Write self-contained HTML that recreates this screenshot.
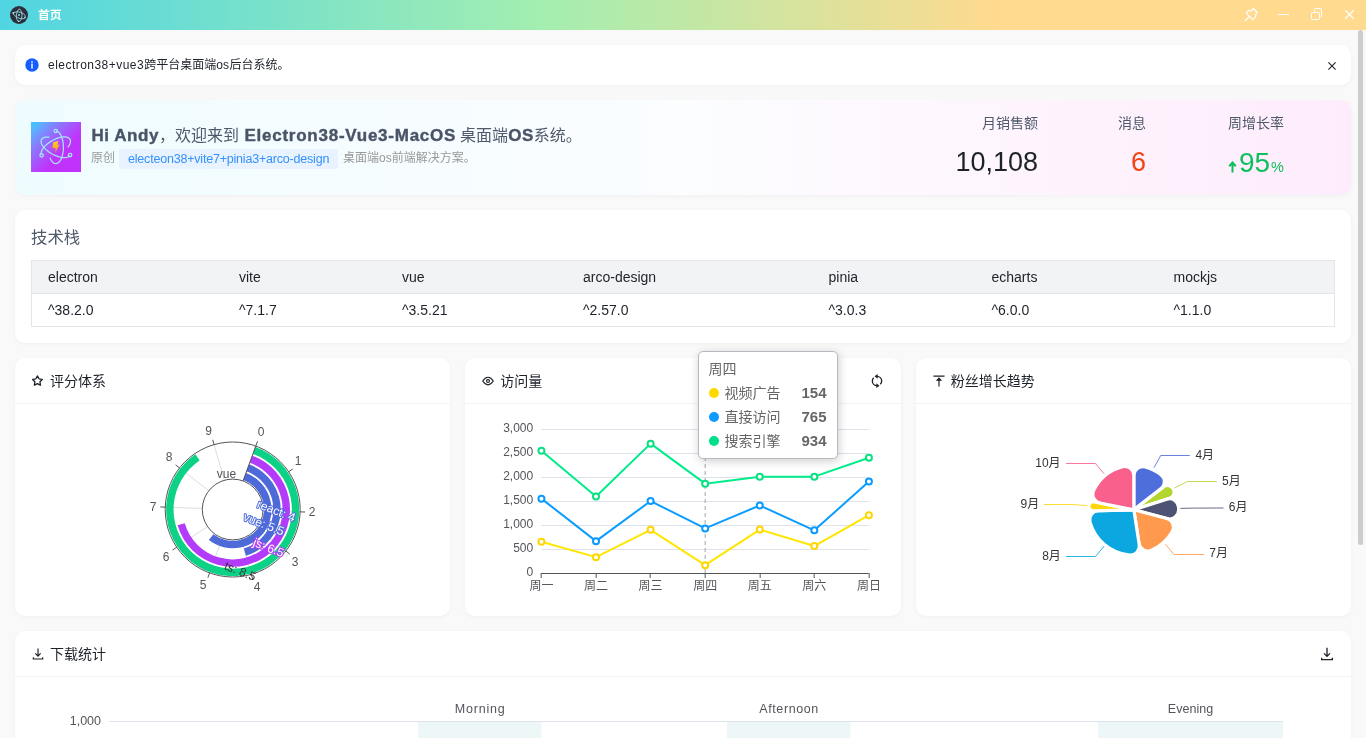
<!DOCTYPE html>
<html lang="zh-CN">
<head>
<meta charset="utf-8">
<title>首页</title>
<style>

*{box-sizing:border-box;margin:0;padding:0}
body{will-change:transform}
html,body{width:1366px;height:738px;overflow:hidden;background:#f9f9f9;font-family:"Liberation Sans","Noto Sans CJK SC",sans-serif;color:#1d2129;font-size:14px}
.abs{position:absolute}
.card{position:absolute;background:#fff;border-radius:10px;box-shadow:0 1px 4px rgba(0,0,0,.04)}
.titlebar{position:absolute;left:0;top:0;width:1366px;height:30px;background:linear-gradient(to right,#50d5e2 0%,#a4eeb0 40%,#ffda8f 73%,#ffda8f 100%)}
.t{position:absolute;white-space:nowrap;line-height:1}
.chd{position:absolute;left:0;top:0;right:0;height:46px;border-bottom:1px solid #f2f3f5}
.chd .t{font-size:14px;color:#1d2129}
.hd b{color:#4a5467;font-size:17px;letter-spacing:0.55px;-webkit-text-stroke:0.4px #4a5467}
svg{position:absolute;overflow:visible}
svg text{font-family:"Liberation Sans","Noto Sans CJK SC",sans-serif}

</style>
</head>
<body>

<div class="titlebar">
  <svg style="left:10px;top:6px" width="18" height="18" viewBox="0 0 18 18">
    <circle cx="9" cy="9" r="9" fill="#2b2e3b"/>
    <g fill="none" stroke="#a9edf6" stroke-width="0.8" stroke-linecap="round">
      <path d="M3.2 7.2 C5.2 5.2 9.6 5.4 13.2 7.6 C14.8 8.6 15.6 9.8 15.2 10.8"/>
      <path d="M14.6 12.2 C12.6 13.6 8.2 12.6 5 9.8 C3.8 8.8 3 7.6 3.2 6.6"/>
      <path d="M9.6 3 C11.8 4.6 12.6 8.8 11.6 12.2 C11 14.2 10 15.4 9 15.4"/>
      <path d="M7.8 15 C6.2 13.4 5.8 9.6 7 6.2 C7.6 4.4 8.6 3.2 9.4 3.2"/>
    </g>
    <circle cx="9" cy="9" r="0.9" fill="#a9edf6"/><circle cx="15" cy="11.6" r="0.8" fill="#a9edf6"/><circle cx="3.2" cy="6.9" r="0.8" fill="#a9edf6"/><circle cx="8.6" cy="15.3" r="0.8" fill="#a9edf6"/>
  </svg>
  <div class="t" style="left:38px;top:9.6px;font-size:11.8px;font-weight:bold;color:#fff">首页</div>
  <svg style="left:1243px;top:7px" width="16" height="16" viewBox="0 0 16 16" fill="none" stroke="#fff" stroke-width="1.25" stroke-linejoin="round" stroke-linecap="round">
    <path d="M3.4 6.4 Q4.3 4.2 5.9 3.7 Q7.2 3.4 8.3 3.9 L10.4 1.5 L14.4 5.5 L12.5 7.4 Q13.1 8.6 12.6 9.6 Q11.8 11.5 9.7 12.5 Z"/>
    <path d="M6.1 9.8 L2.2 13.7"/>
  </svg>
  <svg style="left:1278px;top:14px" width="11" height="1" viewBox="0 0 11 1"><rect width="11" height="1" fill="#fff"/></svg>
  <svg style="left:1310px;top:8px" width="13" height="12" viewBox="0 0 13 12" fill="none" stroke="#fff" stroke-width="1">
    <rect x="1.5" y="4.5" width="8" height="7" rx="0.8"/>
    <path d="M4.5 3.5 V1.3 Q4.5 0.5 5.3 0.5 H10.7 Q11.5 0.5 11.5 1.3 V7.7 Q11.5 8.5 10.7 8.5 H10.3"/>
  </svg>
  <svg style="left:1345px;top:10px" width="9" height="9" viewBox="0 0 9 9" stroke="#fff" stroke-width="1.1" stroke-linecap="round"><path d="M0.5 0.5 L8.5 8.5 M8.5 0.5 L0.5 8.5"/></svg>
</div>


<div class="card" style="left:15px;top:45px;width:1336px;height:40px">
  <svg style="left:10px;top:13px" width="14" height="14" viewBox="0 0 14 14"><circle cx="7" cy="7" r="6.7" fill="#165dff"/><rect x="6.3" y="5.6" width="1.4" height="5" fill="#fff"/><rect x="6.3" y="3.2" width="1.4" height="1.5" fill="#fff"/></svg>
  <div class="t" style="left:33px;top:13.5px;font-size:12px;color:#1d2129"><span style="letter-spacing:0.47px">electron38+vue3</span>跨平台桌面端<span style="letter-spacing:0.3px">os</span>后台系统。</div>
  <svg style="left:1313px;top:17px" width="8" height="8" viewBox="0 0 8 8" stroke="#1d2129" stroke-width="1.1"><path d="M0.4 0.4 L7.6 7.6 M7.6 0.4 L0.4 7.6"/></svg>
</div>


<div class="card" style="left:15px;top:100px;width:1336px;height:95px;background:linear-gradient(to right,#effcff 0%,#fbfdff 50%,#fef8fe 65%,#feecfc 100%)">
  <svg style="left:16px;top:22px" width="50" height="50" viewBox="0 0 50 50">
    <defs><linearGradient id="lg1" x1="0" y1="0" x2="1" y2="1"><stop offset="0" stop-color="#35ccff"/><stop offset="0.12" stop-color="#5caeff"/><stop offset="0.3" stop-color="#8a78fd"/><stop offset="0.5" stop-color="#b04afc"/><stop offset="0.62" stop-color="#c033fb"/><stop offset="1" stop-color="#c131fb"/></linearGradient>
    <linearGradient id="lg2" x1="0" y1="0" x2="0" y2="1"><stop offset="0" stop-color="#ffd21f"/><stop offset="1" stop-color="#ff8f1f"/></linearGradient></defs>
    <rect width="50" height="50" fill="url(#lg1)"/>
    <path d="M25.73 9.12 L26.45 9.39 L27.15 9.8 L27.84 10.36 L28.5 11.06 L29.12 11.89 L29.7 12.84 L30.24 13.91 L30.72 15.09 L31.15 16.36 L31.53 17.71 L31.84 19.13 L32.08 20.62 L32.26 22.14 L32.36 23.7 L32.4 25.26 L32.37 26.83 L32.26 28.39 L32.09 29.92 L31.85 31.4 L31.54 32.83 L31.17 34.18 L30.74 35.46 L30.26 36.64 L29.73 37.71 L29.15 38.67 L28.53 39.51 L27.87 40.21 L27.19 40.78 L26.48 41.2 L25.76 41.47 L25.03 41.59 L24.3 41.56 L23.57 41.38 L22.85 41.06 L22.15 40.58 L21.48 39.96 L20.84 39.21 L20.23 38.33 L19.67 37.32 L19.15 36.21 M38.56 33.86 L37.98 34.36 L37.28 34.79 L36.46 35.12 L35.54 35.36 L34.51 35.51 L33.39 35.57 L32.2 35.53 L30.93 35.39 L29.61 35.16 L28.24 34.84 L26.85 34.43 L25.43 33.93 L24 33.36 L22.59 32.71 L21.19 31.99 L19.83 31.21 L18.52 30.37 L17.26 29.49 L16.07 28.57 L14.96 27.62 L13.95 26.64 L13.04 25.66 L12.23 24.67 L11.54 23.68 L10.98 22.71 L10.54 21.77 L10.24 20.86 L10.07 19.99 L10.04 19.17 L10.14 18.4 L10.39 17.7 L10.76 17.07 L11.27 16.52 L11.9 16.05 L12.65 15.66 L13.52 15.37 L14.48 15.16 L15.55 15.05 L16.7 15.04 L17.93 15.12 M10.25 32.44 L10.13 31.68 L10.14 30.86 L10.29 29.99 L10.58 29.07 L10.99 28.12 L11.54 27.15 L12.21 26.15 L12.99 25.15 L13.89 24.15 L14.89 23.17 L15.97 22.2 L17.15 21.26 L18.39 20.36 L19.69 19.5 L21.04 18.7 L22.42 17.96 L23.83 17.28 L25.24 16.68 L26.65 16.17 L28.05 15.73 L29.41 15.39 L30.73 15.14 L32 14.98 L33.2 14.92 L34.32 14.95 L35.35 15.08 L36.28 15.31 L37.11 15.62 L37.82 16.03 L38.42 16.53 L38.88 17.1 L39.22 17.75 L39.42 18.48 L39.48 19.26 L39.41 20.1 L39.2 20.99 L38.86 21.92 L38.39 22.89 L37.79 23.87 L37.07 24.87" fill="none" stroke="#a3e6fc" stroke-width="1.25" stroke-linecap="round" stroke-linejoin="round"/>
    <circle cx="24.8" cy="9" r="1.7" fill="none" stroke="#a3e6fc" stroke-width="1.25"/><circle cx="39.11" cy="33.1" r="1.7" fill="none" stroke="#a3e6fc" stroke-width="1.25"/><circle cx="10.6" cy="33.3" r="1.7" fill="none" stroke="#a3e6fc" stroke-width="1.25"/>
    <path d="M22.2 20.2 L27.5 19 L26.3 23 L28.7 22.6 L24.2 30.7 L24.7 26.3 L21.4 25.9 Z" fill="url(#lg2)"/>
  </svg>
  <div class="t hd" style="left:76.5px;top:26.5px;font-size:16px;color:#4e5969"><b>Hi Andy</b>，欢迎来到<b style="margin-left:5.5px;letter-spacing:0.75px">Electron38-Vue3-MacOS</b><span style="margin-left:4px">桌面端</span><b>OS</b>系统。</div>
  <div class="t" style="left:76px;top:52px;font-size:12px;color:#999">原创</div>
  <div class="abs" style="left:104px;top:49px;width:219px;height:20px;background:#e8f3ff;border-radius:2px"></div>
  <div class="t" style="left:113px;top:52.5px;font-size:12.5px;color:#3491fa;letter-spacing:-0.2px">electeon38+vite7+pinia3+arco-design</div>
  <div class="t" style="left:328px;top:52px;font-size:12px;color:#999">桌面端os前端解决方案。</div>

  <div class="t" style="right:313px;top:16px;font-size:14px;color:#4e5969">月销售额</div>
  <div class="t" style="right:313px;top:49px;font-size:27px;color:#1d2129">10,108</div>
  <div class="t" style="right:205px;top:16px;font-size:14px;color:#4e5969">消息</div>
  <div class="t" style="right:205px;top:49px;font-size:27px;color:#f5420f">6</div>
  <div class="t" style="right:67px;top:16px;font-size:14px;color:#4e5969">周增长率</div>
  <div class="t" style="right:67px;top:49px;font-size:28px;color:#0fbe5d">95<span style="font-size:14.5px;margin-left:1px">%</span></div>
  <svg style="left:1213px;top:61px" width="9" height="12" viewBox="0 0 9 12" fill="none" stroke="#0fbe5d" stroke-width="2"><path d="M4.5 11.5 V2 M1.2 5.2 L4.5 1.6 L7.8 5.2"/></svg>
</div>


<div class="card" style="left:15px;top:210px;width:1336px;height:133px">
  <div class="t" style="left:16px;top:19.3px;font-size:16.4px;color:#4e5969">技术栈</div>
  <div class="abs" style="left:16px;top:50px;width:1304px;height:67px;border:1px solid #e5e6eb;background:#fff">
    <div class="abs" style="left:0;top:0;width:1302px;height:33px;background:#f2f3f5;border-bottom:1px solid #e5e6eb"></div>
<div class="t" style="left:16px;top:9px;font-size:14px;color:#1d2129">electron</div><div class="t" style="left:16px;top:42px;font-size:14px;color:#1d2129">^38.2.0</div><div class="t" style="left:207px;top:9px;font-size:14px;color:#1d2129">vite</div><div class="t" style="left:207px;top:42px;font-size:14px;color:#1d2129">^7.1.7</div><div class="t" style="left:370px;top:9px;font-size:14px;color:#1d2129">vue</div><div class="t" style="left:370px;top:42px;font-size:14px;color:#1d2129">^3.5.21</div><div class="t" style="left:551px;top:9px;font-size:14px;color:#1d2129">arco-design</div><div class="t" style="left:551px;top:42px;font-size:14px;color:#1d2129">^2.57.0</div><div class="t" style="left:796.5px;top:9px;font-size:14px;color:#1d2129">pinia</div><div class="t" style="left:796.5px;top:42px;font-size:14px;color:#1d2129">^3.0.3</div><div class="t" style="left:959.5px;top:9px;font-size:14px;color:#1d2129">echarts</div><div class="t" style="left:959.5px;top:42px;font-size:14px;color:#1d2129">^6.0.0</div><div class="t" style="left:1141.5px;top:9px;font-size:14px;color:#1d2129">mockjs</div><div class="t" style="left:1141.5px;top:42px;font-size:14px;color:#1d2129">^1.1.0</div>
  </div>
</div>


<div class="card" style="left:15px;top:358px;width:435.33px;height:258px">
  <div class="chd">
    <svg style="left:16.4px;top:15.7px" width="13.4" height="13.4" viewBox="0 0 48 48" fill="none" stroke="#1d2129" stroke-width="4.6"><path d="M22.552 6.908a.5.5 0 0 1 .896 0l5.02 10.17a.5.5 0 0 0 .376.274l11.224 1.631a.5.5 0 0 1 .277.853l-8.122 7.916a.5.5 0 0 0-.143.443l1.917 11.178a.5.5 0 0 1-.726.527l-10.038-5.278a.5.5 0 0 0-.466 0l-10.038 5.278a.5.5 0 0 1-.726-.527l1.918-11.178a.5.5 0 0 0-.144-.443l-8.122-7.916a.5.5 0 0 1 .278-.853l11.223-1.63a.5.5 0 0 0 .377-.274l5.019-10.17Z"/></svg>
    <div class="t" style="left:35px;top:16px">评分体系</div>
  </div>
  <svg style="left:0;top:0" width="435" height="258"><g transform="translate(-15,-358)">
<line x1="243.1" y1="480.93" x2="255.79" y2="446.07" stroke="#dcdee6" stroke-width="1"/>
<line x1="257.9" y1="492.5" x2="288.66" y2="471.75" stroke="#dcdee6" stroke-width="1"/>
<line x1="263.08" y1="510.56" x2="300.16" y2="511.86" stroke="#dcdee6" stroke-width="1"/>
<line x1="256.66" y1="528.22" x2="285.89" y2="551.06" stroke="#dcdee6" stroke-width="1"/>
<line x1="241.08" y1="538.72" x2="251.31" y2="574.39" stroke="#dcdee6" stroke-width="1"/>
<line x1="222.3" y1="538.07" x2="209.61" y2="572.93" stroke="#dcdee6" stroke-width="1"/>
<line x1="207.5" y1="526.5" x2="176.74" y2="547.25" stroke="#dcdee6" stroke-width="1"/>
<line x1="202.32" y1="508.44" x2="165.24" y2="507.14" stroke="#dcdee6" stroke-width="1"/>
<line x1="208.74" y1="490.78" x2="179.51" y2="467.94" stroke="#dcdee6" stroke-width="1"/>
<line x1="224.32" y1="480.28" x2="214.09" y2="444.61" stroke="#dcdee6" stroke-width="1"/>
<path d="M245.95 473.09 A38.75 38.75 0 1 1 208.84 540.03 L213.41 534.19 A31.33 31.33 0 1 0 243.41 480.06 Z" fill="#4e6ad9"/>
<path d="M249.12 464.37 A48.02 48.02 0 0 1 245.94 555.66 L243.89 548.53 A40.6 40.6 0 0 0 246.59 471.35 Z" fill="#4e6ad9"/>
<path d="M252.3 455.66 A57.3 57.3 0 1 1 177.62 525.29 L184.75 523.25 A49.88 49.88 0 1 0 249.76 462.63 Z" fill="#b33cfb"/>
<path d="M255.47 446.94 A66.57 66.57 0 1 1 195.47 454.31 L199.62 460.46 A59.15 59.15 0 1 0 252.93 453.91 Z" fill="#0bd285"/>
<circle cx="232.7" cy="509.5" r="67.5" fill="none" stroke="#54555a" stroke-width="1"/>
<circle cx="232.7" cy="509.5" r="30.4" fill="none" stroke="#54555a" stroke-width="1"/>
<line x1="243.1" y1="480.93" x2="255.79" y2="446.07" stroke="#54555a" stroke-width="1"/>
<line x1="255.79" y1="446.07" x2="257.5" y2="441.37" stroke="#54555a" stroke-width="1"/>
<text x="261" y="436.3" font-size="12" fill="#54555a" text-anchor="middle">0</text>
<line x1="288.66" y1="471.75" x2="292.81" y2="468.96" stroke="#54555a" stroke-width="1"/>
<text x="298" y="465.3" font-size="12" fill="#54555a" text-anchor="middle">1</text>
<line x1="300.16" y1="511.86" x2="305.16" y2="512.03" stroke="#54555a" stroke-width="1"/>
<text x="312" y="515.8" font-size="12" fill="#54555a" text-anchor="middle">2</text>
<line x1="285.89" y1="551.06" x2="289.83" y2="554.14" stroke="#54555a" stroke-width="1"/>
<text x="295" y="566.3" font-size="12" fill="#54555a" text-anchor="middle">3</text>
<line x1="251.31" y1="574.39" x2="252.68" y2="579.19" stroke="#54555a" stroke-width="1"/>
<text x="257" y="591.3" font-size="12" fill="#54555a" text-anchor="middle">4</text>
<line x1="209.61" y1="572.93" x2="207.9" y2="577.63" stroke="#54555a" stroke-width="1"/>
<text x="203" y="589.3" font-size="12" fill="#54555a" text-anchor="middle">5</text>
<line x1="176.74" y1="547.25" x2="172.59" y2="550.04" stroke="#54555a" stroke-width="1"/>
<text x="166" y="561.3" font-size="12" fill="#54555a" text-anchor="middle">6</text>
<line x1="165.24" y1="507.14" x2="160.24" y2="506.97" stroke="#54555a" stroke-width="1"/>
<text x="153" y="511.3" font-size="12" fill="#54555a" text-anchor="middle">7</text>
<line x1="179.51" y1="467.94" x2="175.57" y2="464.86" stroke="#54555a" stroke-width="1"/>
<text x="169" y="461.3" font-size="12" fill="#54555a" text-anchor="middle">8</text>
<line x1="214.09" y1="444.61" x2="212.72" y2="439.81" stroke="#54555a" stroke-width="1"/>
<text x="208.5" y="435.3" font-size="12" fill="#54555a" text-anchor="middle">9</text>
<text x="226.5" y="478" font-size="12" fill="#54555a" text-anchor="middle">vue</text>
<text transform="translate(276.3,510.6) rotate(21.5)" y="4.2" font-size="12" fill="#fff" stroke="#4e6ad9" stroke-width="2" stroke-linejoin="round" paint-order="stroke" text-anchor="middle">react: 4</text>
<text transform="translate(263.8,523.9) rotate(21.5)" y="4.2" font-size="12" fill="#fff" stroke="#4e6ad9" stroke-width="2" stroke-linejoin="round" paint-order="stroke" text-anchor="middle">vue: 5.5</text>
<text transform="translate(268.7,547.5) rotate(21.5)" y="4.2" font-size="12" fill="#fff" stroke="#b33cfb" stroke-width="2" stroke-linejoin="round" paint-order="stroke" text-anchor="middle">js: 6.5</text>
<text transform="translate(240.2,571) rotate(21.5)" y="4.2" font-size="12" fill="#333" text-anchor="middle">ts: 8.5</text>
</g></svg>
</div>


<div class="card" style="left:465.33px;top:358px;width:435.33px;height:258px">
  <div class="chd">
    <svg style="left:16px;top:16px" width="14" height="14" viewBox="0 0 48 48" fill="none" stroke="#1d2129" stroke-width="4"><path d="M24 37c6.627 0 12.627-4.333 18-13-5.373-8.667-11.373-13-18-13-6.627 0-12.627 4.333-18 13 5.373 8.667 11.373 13 18 13Z"/><path d="M29 24a5 5 0 1 1-10 0 5 5 0 0 1 10 0Z"/></svg>
    <div class="t" style="left:35px;top:16px">访问量</div>
    <svg style="left:403.6px;top:14.9px" width="16" height="16" viewBox="0 0 48 48" fill="none" stroke="#1d2129" stroke-width="4"><path d="M24 38c-7.732 0-14-6.268-14-14 0-3.815 1.526-7.273 4-9.798M24 10c7.732 0 14 6.268 14 14 0 3.815-1.526 7.273-4 9.798"/><path d="M24 7v6l-4-3 4-3ZM24 41v-6l4 3-4 3Z" fill="#1d2129"/></svg>
  </div>
  <svg style="left:0;top:0" width="435" height="258"><g transform="translate(-465.33,-358)">
<line x1="541.5" y1="549.5" x2="869.0" y2="549.5" stroke="#dfe2ec" stroke-width="1"/>
<line x1="541.5" y1="525.5" x2="869.0" y2="525.5" stroke="#dfe2ec" stroke-width="1"/>
<line x1="541.5" y1="501.5" x2="869.0" y2="501.5" stroke="#dfe2ec" stroke-width="1"/>
<line x1="541.5" y1="477.5" x2="869.0" y2="477.5" stroke="#dfe2ec" stroke-width="1"/>
<line x1="541.5" y1="453.5" x2="869.0" y2="453.5" stroke="#dfe2ec" stroke-width="1"/>
<line x1="541.5" y1="429.5" x2="869.0" y2="429.5" stroke="#dfe2ec" stroke-width="1"/>
<text x="533.5" y="576" font-size="12" fill="#54555a" text-anchor="end">0</text>
<text x="533.5" y="552" font-size="12" fill="#54555a" text-anchor="end">500</text>
<text x="533.5" y="528" font-size="12" fill="#54555a" text-anchor="end">1,000</text>
<text x="533.5" y="504" font-size="12" fill="#54555a" text-anchor="end">1,500</text>
<text x="533.5" y="480" font-size="12" fill="#54555a" text-anchor="end">2,000</text>
<text x="533.5" y="456" font-size="12" fill="#54555a" text-anchor="end">2,500</text>
<text x="533.5" y="432" font-size="12" fill="#54555a" text-anchor="end">3,000</text>
<line x1="705.5" y1="429" x2="705.5" y2="573.5" stroke="#a3a5ad" stroke-width="1" stroke-dasharray="4 3"/>
<line x1="541.5" y1="573.5" x2="869.0" y2="573.5" stroke="#54555a" stroke-width="1"/>
<line x1="541.5" y1="573.0" x2="541.5" y2="578.0" stroke="#54555a" stroke-width="1"/>
<text x="541.75" y="589.8" font-size="12" fill="#54555a" text-anchor="middle">周一</text>
<line x1="596.5" y1="573.0" x2="596.5" y2="578.0" stroke="#54555a" stroke-width="1"/>
<text x="596.33" y="589.8" font-size="12" fill="#54555a" text-anchor="middle">周二</text>
<line x1="650.5" y1="573.0" x2="650.5" y2="578.0" stroke="#54555a" stroke-width="1"/>
<text x="650.92" y="589.8" font-size="12" fill="#54555a" text-anchor="middle">周三</text>
<line x1="705.5" y1="573.0" x2="705.5" y2="578.0" stroke="#54555a" stroke-width="1"/>
<text x="705.5" y="589.8" font-size="12" fill="#54555a" text-anchor="middle">周四</text>
<line x1="760.5" y1="573.0" x2="760.5" y2="578.0" stroke="#54555a" stroke-width="1"/>
<text x="760.08" y="589.8" font-size="12" fill="#54555a" text-anchor="middle">周五</text>
<line x1="814.5" y1="573.0" x2="814.5" y2="578.0" stroke="#54555a" stroke-width="1"/>
<text x="814.67" y="589.8" font-size="12" fill="#54555a" text-anchor="middle">周六</text>
<line x1="869.5" y1="573.0" x2="869.5" y2="578.0" stroke="#54555a" stroke-width="1"/>
<text x="869.25" y="589.8" font-size="12" fill="#54555a" text-anchor="middle">周日</text>
<polyline points="541.75,541.75 596.33,557.15 650.92,529.8 705.5,565.15 760.08,529.55 814.67,546.05 869.25,515.15" fill="none" stroke="#ffe600" stroke-width="2" stroke-linejoin="bevel"/>
<circle cx="541.75" cy="541.75" r="3" fill="#fff" stroke="#ffd500" stroke-width="2"/>
<circle cx="596.33" cy="557.15" r="3" fill="#fff" stroke="#ffd500" stroke-width="2"/>
<circle cx="650.92" cy="529.8" r="3" fill="#fff" stroke="#ffd500" stroke-width="2"/>
<circle cx="705.5" cy="565.15" r="3" fill="#fff" stroke="#ffd500" stroke-width="2"/>
<circle cx="760.08" cy="529.55" r="3" fill="#fff" stroke="#ffd500" stroke-width="2"/>
<circle cx="814.67" cy="546.05" r="3" fill="#fff" stroke="#ffd500" stroke-width="2"/>
<circle cx="869.25" cy="515.15" r="3" fill="#fff" stroke="#ffd500" stroke-width="2"/>
<polyline points="541.75,498.65 596.33,541.15 650.92,501.05 705.5,528.45 760.08,505.45 814.67,530.35 869.25,481.55" fill="none" stroke="#0a9cff" stroke-width="2" stroke-linejoin="bevel"/>
<circle cx="541.75" cy="498.65" r="3" fill="#fff" stroke="#0a99ff" stroke-width="2"/>
<circle cx="596.33" cy="541.15" r="3" fill="#fff" stroke="#0a99ff" stroke-width="2"/>
<circle cx="650.92" cy="501.05" r="3" fill="#fff" stroke="#0a99ff" stroke-width="2"/>
<circle cx="705.5" cy="528.45" r="3" fill="#fff" stroke="#0a99ff" stroke-width="2"/>
<circle cx="760.08" cy="505.45" r="3" fill="#fff" stroke="#0a99ff" stroke-width="2"/>
<circle cx="814.67" cy="530.35" r="3" fill="#fff" stroke="#0a99ff" stroke-width="2"/>
<circle cx="869.25" cy="481.55" r="3" fill="#fff" stroke="#0a99ff" stroke-width="2"/>
<polyline points="541.75,450.65 596.33,496.45 650.92,443.65 705.5,483.65 760.08,476.65 814.67,476.65 869.25,457.75" fill="none" stroke="#00ec8a" stroke-width="2" stroke-linejoin="bevel"/>
<circle cx="541.75" cy="450.65" r="3" fill="#fff" stroke="#0bdf80" stroke-width="2"/>
<circle cx="596.33" cy="496.45" r="3" fill="#fff" stroke="#0bdf80" stroke-width="2"/>
<circle cx="650.92" cy="443.65" r="3" fill="#fff" stroke="#0bdf80" stroke-width="2"/>
<circle cx="705.5" cy="483.65" r="3" fill="#fff" stroke="#0bdf80" stroke-width="2"/>
<circle cx="760.08" cy="476.65" r="3" fill="#fff" stroke="#0bdf80" stroke-width="2"/>
<circle cx="814.67" cy="476.65" r="3" fill="#fff" stroke="#0bdf80" stroke-width="2"/>
<circle cx="869.25" cy="457.75" r="3" fill="#fff" stroke="#0bdf80" stroke-width="2"/>
</g></svg>
<div class="abs" style="left:232.67000000000002px;top:-7px;width:140px;height:107.5px;background:#fff;border:1px solid #b8b9c0;border-radius:5px;box-shadow:1px 2px 10px rgba(0,0,0,.2);color:#666;font-size:14px">
      <div class="t" style="left:9.5px;top:10px;font-size:14px;color:#666">周四</div>
      <div class="abs" style="left:10px;top:35.7px;width:10px;height:10px;border-radius:50%;background:#ffd900"></div>
      <div class="t" style="left:25.5px;top:33.7px;color:#666">视频广告</div><div class="t" style="right:10.5px;top:32.6px;font-weight:bold;color:#666;font-size:15px">154</div>
      <div class="abs" style="left:10px;top:59.7px;width:10px;height:10px;border-radius:50%;background:#0e9bff"></div>
      <div class="t" style="left:25.5px;top:57.7px;color:#666">直接访问</div><div class="t" style="right:10.5px;top:56.6px;font-weight:bold;color:#666;font-size:15px">765</div>
      <div class="abs" style="left:10px;top:83.7px;width:10px;height:10px;border-radius:50%;background:#00e08a"></div>
      <div class="t" style="left:25.5px;top:81.7px;color:#666">搜索引擎</div><div class="t" style="right:10.5px;top:80.6px;font-weight:bold;color:#666;font-size:15px">934</div>
    </div>
</div>


<div class="card" style="left:915.67px;top:358px;width:435.33px;height:258px">
  <div class="chd">
    <svg style="left:16.3px;top:16px" width="14" height="14" viewBox="0 0 48 48" fill="none" stroke="#1d2129" stroke-width="4"><path d="M43 7H5M24 20v23"/><path d="M24 13.96 30.453 21H17.546L24 13.96Z" fill="#1d2129"/></svg>
    <div class="t" style="left:35px;top:16px">粉丝增长趋势</div>
  </div>
  <svg style="left:0;top:0" width="435" height="258"><g transform="translate(-915.67,-358)">
<path d="M1133.5 509.8 L1133.5 475.56 A9 9 0 0 1 1144.79 466.86 A44.4 44.4 0 0 1 1160.57 474.61 A9 9 0 0 1 1160.59 488.86 Z" fill="#4e6fdb" stroke="#fff" stroke-width="3.2" stroke-linejoin="round"/>
<path d="M1133.5 509.8 L1163.18 486.86 A6.57 6.57 0 0 1 1173.01 489 A44.65 44.65 0 0 1 1173.02 489.02 A6.57 6.57 0 0 1 1169.21 498.33 Z" fill="#b3d62f" stroke="#fff" stroke-width="3.2" stroke-linejoin="round"/>
<path d="M1133.5 509.8 L1166.49 499.21 A9 9 0 0 1 1178.23 507.27 A44.8 44.8 0 0 1 1178.3 509.99 A9 9 0 0 1 1167 518.65 Z" fill="#4e5273" stroke="#fff" stroke-width="3.2" stroke-linejoin="round"/>
<path d="M1133.5 509.8 L1166.4 518.49 A9 9 0 0 1 1171.93 531.64 A44.2 44.2 0 0 1 1151.21 550.3 A9 9 0 0 1 1138.71 543.43 Z" fill="#ff994d" stroke="#fff" stroke-width="3.2" stroke-linejoin="round"/>
<path d="M1133.5 509.8 L1138.91 544.76 A9 9 0 0 1 1129.16 555.09 A45.5 45.5 0 0 1 1089.71 522.17 A9 9 0 0 1 1098.14 510.73 Z" fill="#0ca7e0" stroke="#fff" stroke-width="3.2" stroke-linejoin="round"/>
<path d="M1133.5 509.8 L1093.13 510.86 A4.56 4.56 0 0 1 1088.47 505.91 A45.2 45.2 0 0 1 1088.47 505.89 A4.56 4.56 0 0 1 1093.91 501.82 Z" fill="#ffd60a" stroke="#fff" stroke-width="3.2" stroke-linejoin="round"/>
<path d="M1133.5 509.8 L1099.74 502.99 A9 9 0 0 1 1093.43 490.22 A44.6 44.6 0 0 1 1122.22 466.65 A9 9 0 0 1 1133.5 475.36 Z" fill="#f9608b" stroke="#fff" stroke-width="3.2" stroke-linejoin="round"/>
<polyline points="1153.7,467.7 1160.4,455.5 1189.5,455.5" fill="none" stroke="#4e6fdb" stroke-width="1" stroke-opacity="0.85"/>
<text x="1195.1" y="459.2" font-size="12" fill="#333" text-anchor="start">4月</text>
<polyline points="1174,488 1187,481.5 1216.5,481.5" fill="none" stroke="#b3d62f" stroke-width="1" stroke-opacity="0.85"/>
<text x="1221.7" y="485.1" font-size="12" fill="#333" text-anchor="start">5月</text>
<polyline points="1180,508.4 1194,508.1 1223.2,508" fill="none" stroke="#4e5273" stroke-width="1" stroke-opacity="0.85"/>
<text x="1228.4" y="511.3" font-size="12" fill="#333" text-anchor="start">6月</text>
<polyline points="1165.1,544.2 1173.7,554.5 1203.6,554.5" fill="none" stroke="#ff994d" stroke-width="1" stroke-opacity="0.85"/>
<text x="1208.9" y="557.3" font-size="12" fill="#333" text-anchor="start">7月</text>
<polyline points="1103.8,546.1 1095.1,556.5 1065.6,556.5" fill="none" stroke="#0ca7e0" stroke-width="1" stroke-opacity="0.85"/>
<text x="1060.5" y="559.9" font-size="12" fill="#333" text-anchor="end">8月</text>
<polyline points="1087.1,505.8 1072.8,504.5 1043.3,504.5" fill="none" stroke="#ffd60a" stroke-width="1" stroke-opacity="0.85"/>
<text x="1038.9" y="508.3" font-size="12" fill="#333" text-anchor="end">9月</text>
<polyline points="1103.8,473.8 1095.1,463.5 1065.6,463.5" fill="none" stroke="#f9608b" stroke-width="1" stroke-opacity="0.85"/>
<text x="1060.3" y="467.0" font-size="12" fill="#333" text-anchor="end">10月</text>
</g></svg>
</div>


<div class="card" style="left:15px;top:631px;width:1336px;height:140px">
  <div class="chd">
    <svg style="left:16px;top:16.2px" width="14" height="14" viewBox="0 0 48 48" fill="none" stroke="#1d2129" stroke-width="4"><path d="m33.072 22.071-9.07 9.071-9.072-9.07M24 5v26m16 4v6H8v-6"/></svg>
    <div class="t" style="left:35px;top:16px">下载统计</div>
    <svg style="left:1304px;top:15px" width="16" height="16" viewBox="0 0 48 48" fill="none" stroke="#1d2129" stroke-width="4"><path d="m33.072 22.071-9.07 9.071-9.072-9.07M24 5v26m16 4v6H8v-6"/></svg>
  </div>
  <svg style="left:0;top:0" width="1336" height="107"><g transform="translate(-15,-631)">
<rect x="418" y="721" width="123.5" height="30" fill="#edf7f8"/>
<text x="479.75" y="713" font-size="12.5" fill="#54555a" text-anchor="middle" textLength="50" lengthAdjust="spacing">Morning</text>
<rect x="727" y="721" width="123.5" height="30" fill="#edf7f8"/>
<text x="788.75" y="713" font-size="12.5" fill="#54555a" text-anchor="middle" textLength="59" lengthAdjust="spacing">Afternoon</text>
<rect x="1098" y="721" width="185" height="30" fill="#edf7f8"/>
<text x="1190.5" y="713" font-size="12.5" fill="#54555a" text-anchor="middle" textLength="45.5" lengthAdjust="spacing">Evening</text>
<line x1="109" y1="721.5" x2="1283" y2="721.5" stroke="#dde2ec" stroke-width="1"/>
<text x="101" y="724.5" font-size="12.5" fill="#54555a" text-anchor="end">1,000</text>
</g></svg>
</div>

<div class="abs" style="left:1358px;top:30.3px;width:5px;height:514.6px;background:#cdcdcd;border-radius:2.5px"></div>
</body>
</html>
